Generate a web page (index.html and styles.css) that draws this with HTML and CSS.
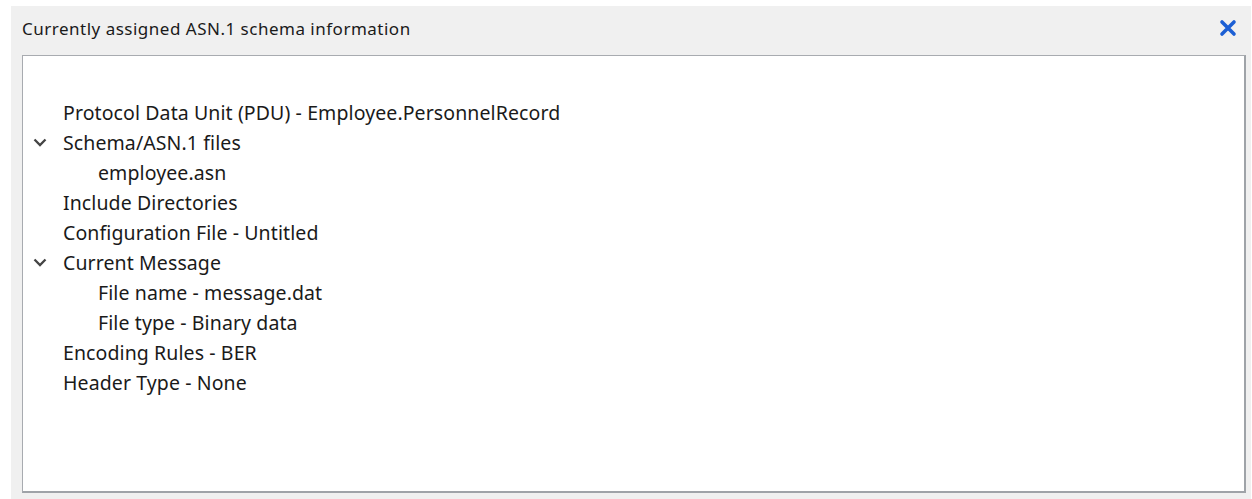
FILE: index.html
```html
<!DOCTYPE html>
<html>
<head>
<meta charset="utf-8">
<link rel="stylesheet" href="styles.css">
</head>
<body>
<div class="panel">
  <div class="panel-header">
    <span class="panel-title">Currently assigned ASN.1 schema information</span>
    <button class="close-btn" aria-label="Close">
      <svg width="18" height="18" viewBox="0 0 18 18">
        <path d="M3 3 L15 15 M15 3 L3 15" stroke="#1c5fd4" stroke-width="3.6" stroke-linecap="round"/>
      </svg>
    </button>
  </div>
  <div class="tree-box">
    <ul class="tree">
      <li class="row"><span class="twisty"></span>Protocol Data Unit (PDU) - Employee.PersonnelRecord</li>
      <li class="row"><span class="twisty"><svg width="14" height="9" viewBox="0 0 14 9"><path d="M1.5 1.5 L7 7 L12.5 1.5" fill="none" stroke="#444" stroke-width="2.3"/></svg></span>Schema/ASN.1 files</li>
      <li class="row child"><span class="twisty"></span>employee.asn</li>
      <li class="row"><span class="twisty"></span>Include Directories</li>
      <li class="row"><span class="twisty"></span>Configuration File - Untitled</li>
      <li class="row"><span class="twisty"><svg width="14" height="9" viewBox="0 0 14 9"><path d="M1.5 1.5 L7 7 L12.5 1.5" fill="none" stroke="#444" stroke-width="2.3"/></svg></span>Current Message</li>
      <li class="row child"><span class="twisty"></span>File name - message.dat</li>
      <li class="row child"><span class="twisty"></span>File type - Binary data</li>
      <li class="row"><span class="twisty"></span>Encoding Rules - BER</li>
      <li class="row"><span class="twisty"></span>Header Type - None</li>
    </ul>
  </div>
</div>
</body>
</html>
```

FILE: styles.css
```css
html, body {
  margin: 0;
  padding: 0;
  background: #ffffff;
}

body {
  padding: 6px 1px 0 11px;
  font-family: "Noto Sans", "Open Sans", sans-serif;
  color: #1a1a1a;
}

.panel {
  background: #f0f0f0;
  height: 493px;
  display: flex;
  flex-direction: column;
  padding: 0 5px 6px 11px;
  box-sizing: border-box;
}

.panel-header {
  display: flex;
  align-items: center;
  justify-content: space-between;
  height: 49px;
}

.panel-title {
  font-size: 17px;
  letter-spacing: 0.5px;
  margin-top: -5px;
}

.close-btn {
  border: none;
  background: none;
  padding: 0;
  margin: -6px 9px 0 0;
  width: 18px;
  height: 18px;
  display: flex;
}

.tree-box {
  flex: 1;
  background: #ffffff;
  border-top: 1px solid #a8abb0;
  border-left: 1px solid #a8abb0;
  border-right: 2px solid #9fa3a8;
  border-bottom: 2px solid #9fa3a8;
}

.tree {
  list-style: none;
  margin: 0;
  padding: 41px 0 0 0;
}

.row {
  display: flex;
  align-items: center;
  height: 30px;
  font-size: 19.5px;
  letter-spacing: 0.1px;
  padding-left: 10px;
}

.row.child {
  padding-left: 45px;
}

.twisty {
  width: 30px;
  flex: none;
  display: flex;
  align-items: center;
  padding-top: 1px;
}
```
